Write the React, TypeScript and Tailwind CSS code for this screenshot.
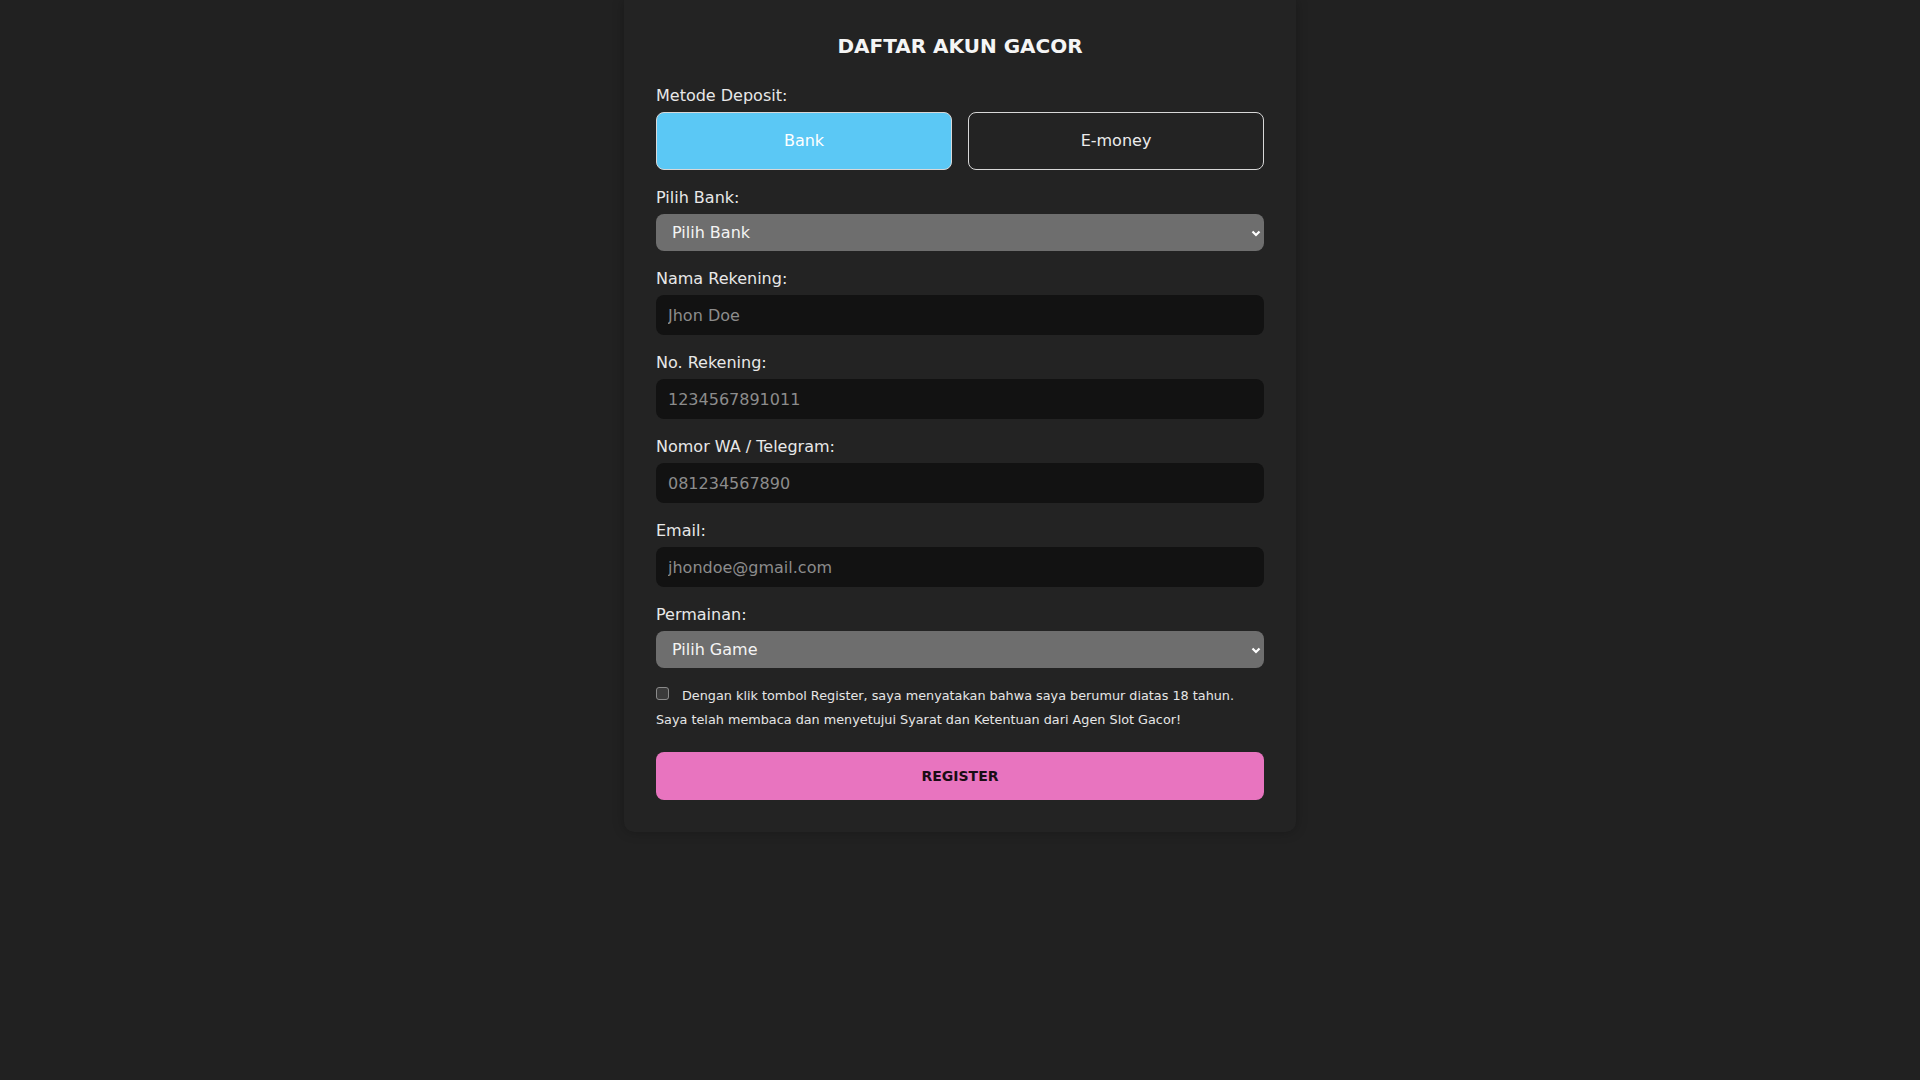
import React, { useState } from "react";

const Chevron = () => (
  <svg
    className="pointer-events-none absolute right-[3px] top-1/2 -translate-y-1/2"
    width="10"
    height="8"
    viewBox="0 0 10 8"
    fill="none"
  >
    <path d="M1.5 2.5 L5 6 L8.5 2.5" stroke="#ffffff" strokeWidth="2.2" />
  </svg>
);

const Field = ({ label, placeholder }: { label: string; placeholder: string }) => (
  <div className="mb-4">
    <label className="mb-1 block text-base leading-6 text-[#e8e8e8]">{label}</label>
    <input
      type="text"
      placeholder={placeholder}
      className="block h-10 w-full rounded-lg bg-[#121212] px-3 text-base text-white outline-none placeholder:text-[#8c8c8c]"
    />
  </div>
);

const SelectField = ({ label, placeholder }: { label: string; placeholder: string }) => (
  <div className="mb-4">
    <label className="mb-1 block text-base leading-6 text-[#e8e8e8]">{label}</label>
    <div className="relative">
      <select className="block h-[37px] w-full appearance-none rounded-lg bg-[#6e6e6e] pl-4 pr-6 text-base text-[#f4f4f4] outline-none">
        <option>{placeholder}</option>
      </select>
      <Chevron />
    </div>
  </div>
);

export default function App() {
  const [method, setMethod] = useState<"bank" | "emoney">("bank");

  return (
    <div className="min-h-screen bg-[#212121] font-['DejaVu_Sans',sans-serif]">
      <div className="mx-auto w-[672px] rounded-b-[10px] bg-[#232323] px-8 pt-8 pb-8 shadow-[0_0_12px_rgba(0,0,0,0.25)]">
        <h2 className="mb-6 text-center text-[20px] font-bold leading-[28px] text-[#f5f5f5]">
          DAFTAR AKUN GACOR
        </h2>

        <div className="mb-4">
          <label className="mb-1 block text-base leading-6 text-[#e8e8e8]">Metode Deposit:</label>
          <div className="flex gap-4">
            <button
              type="button"
              onClick={() => setMethod("bank")}
              className={`h-[58px] flex-1 rounded-lg border border-[#d8d8d8] text-base ${
                method === "bank" ? "bg-[#5bc8f5] text-white" : "bg-transparent text-[#ececec]"
              }`}
            >
              Bank
            </button>
            <button
              type="button"
              onClick={() => setMethod("emoney")}
              className={`h-[58px] flex-1 rounded-lg border border-[#d8d8d8] text-base ${
                method === "emoney" ? "bg-[#5bc8f5] text-white" : "bg-transparent text-[#ececec]"
              }`}
            >
              E-money
            </button>
          </div>
        </div>

        <SelectField label="Pilih Bank:" placeholder="Pilih Bank" />
        <Field label="Nama Rekening:" placeholder="Jhon Doe" />
        <Field label="No. Rekening:" placeholder="1234567891011" />
        <Field label="Nomor WA / Telegram:" placeholder="081234567890" />
        <Field label="Email:" placeholder="jhondoe@gmail.com" />
        <SelectField label="Permainan:" placeholder="Pilih Game" />

        <p className="mb-5 text-[12.8px] leading-6 text-[#e6e6e6]">
          <input
            type="checkbox"
            className="mr-[13px] inline-block h-[13px] w-[13px] appearance-none rounded-[3px] border border-[#8a8a8a] bg-[#3b3b3b] align-baseline"
          />
          Dengan klik tombol Register, saya menyatakan bahwa saya berumur diatas 18 tahun.
          <br />
          Saya telah membaca dan menyetujui Syarat dan Ketentuan dari Agen Slot Gacor!
        </p>

        <button
          type="button"
          className="block h-12 w-full rounded-lg bg-[#e874bf] text-[14px] font-bold text-[#1a0d15]"
        >
          REGISTER
        </button>
      </div>
    </div>
  );
}
